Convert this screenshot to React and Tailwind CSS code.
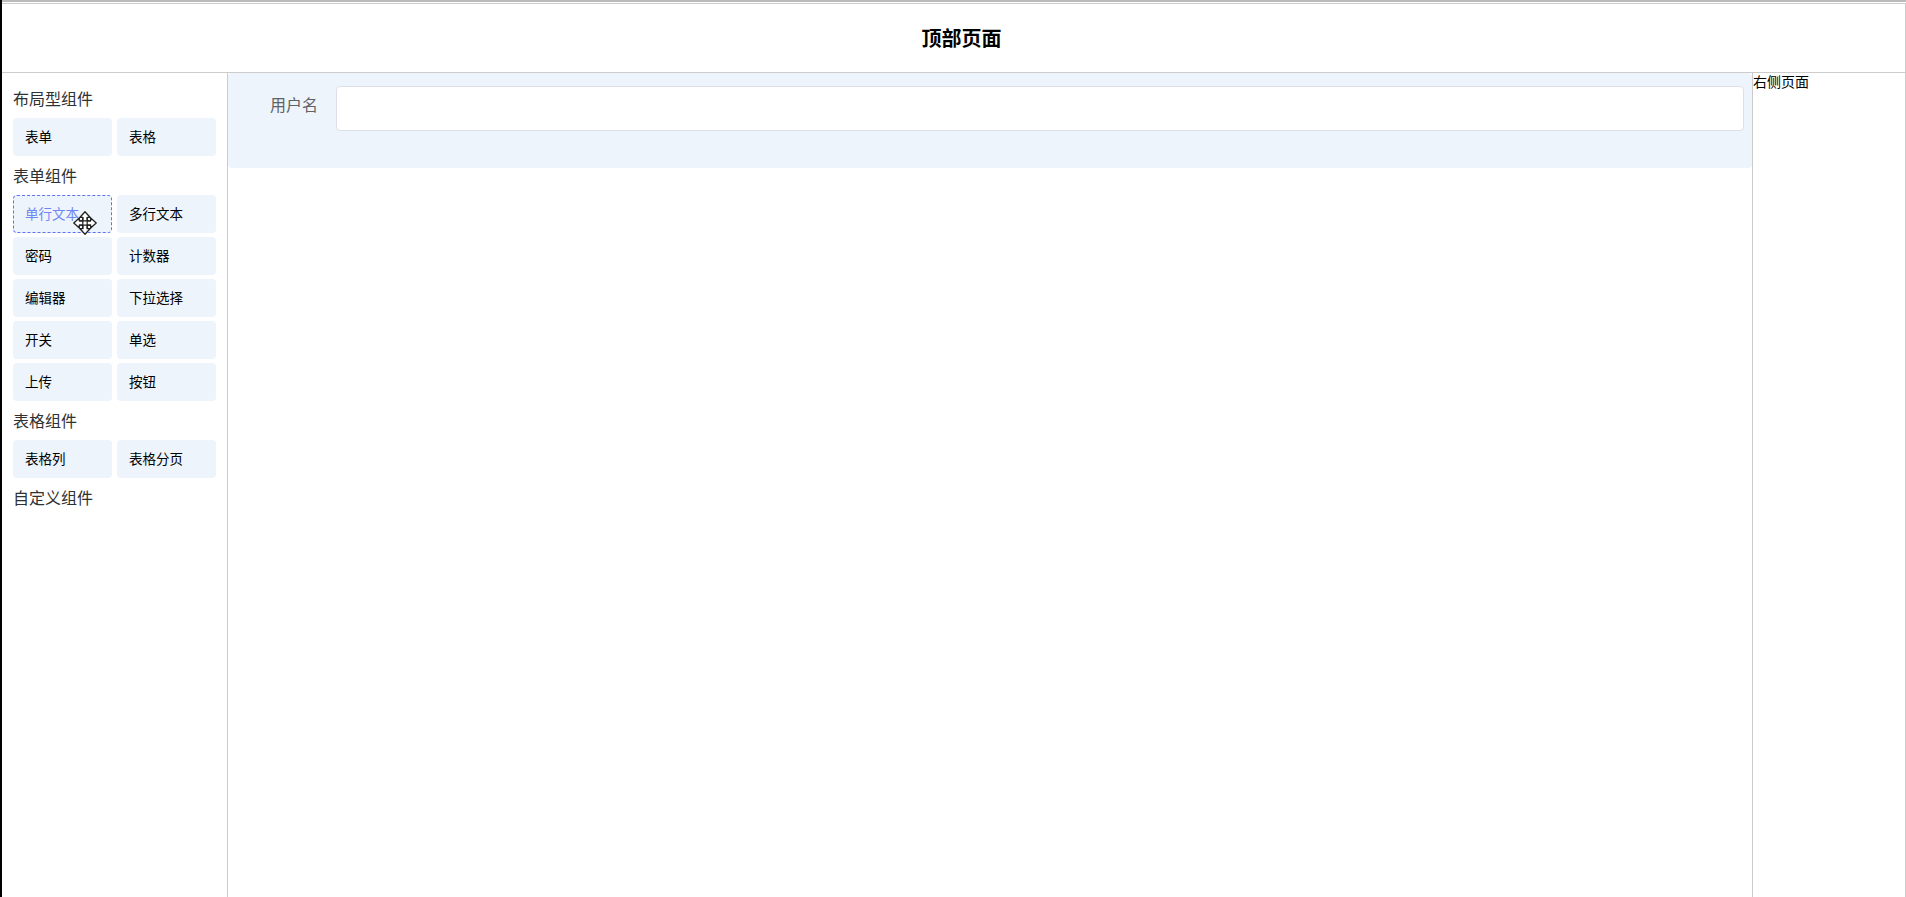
const font = { fontFamily: '"Noto Sans CJK SC", sans-serif' };

function Cursor() {
  return (
    <svg className="absolute left-[59px] top-[15px]" width="24" height="24" viewBox="0 0 24 24">
      <path
        d="M12 0.8 L17 6.3 L14.2 6.3 L14.2 9.8 L17.7 9.8 L17.7 7 L23.2 12 L17.7 17 L17.7 14.2 L14.2 14.2 L14.2 17.7 L17 17.7 L12 23.2 L7 17.7 L9.8 17.7 L9.8 14.2 L6.3 14.2 L6.3 17 L0.8 12 L6.3 7 L6.3 9.8 L9.8 9.8 L9.8 6.3 L7 6.3 Z"
        fill="#fff"
        stroke="#222"
        strokeWidth="1.3"
        strokeLinejoin="round"
      />
      <path d="M9.8 6.3 V17.7 M14.2 6.3 V17.7 M6.3 9.8 H17.7 M6.3 14.2 H17.7" stroke="#222" strokeWidth="1.2" fill="none" />
    </svg>
  );
}

function Item({ label, active }) {
  if (active) {
    return (
      <div className="relative flex h-[38px] items-center rounded-[4px] border border-dashed border-[#5f73f0] bg-[#edf4fc] pb-[2px] pl-[11px] text-[13.5px] text-[#7086f5]">
        {label}
        <Cursor />
      </div>
    );
  }
  return (
    <div className="flex h-[38px] items-center rounded-[4px] bg-[#edf4fc] pb-[2px] pl-[12px] text-[13.5px] text-black">
      {label}
    </div>
  );
}

function Group({ title, items, active }) {
  return (
    <>
      <div className="flex h-[39px] items-center pb-[2px] text-[16px] text-[#303133]">{title}</div>
      {items.length > 0 && (
        <div className="grid grid-cols-[99px_99px] gap-x-[5px] gap-y-[4px]">
          {items.map((i) => (
            <Item key={i} label={i} active={i === active} />
          ))}
        </div>
      )}
    </>
  );
}

export default function App() {
  return (
    <div style={font} className="flex h-[897px] w-[1906px] flex-col overflow-hidden border-l-[2px] border-l-black bg-white">
      <div className="h-[2px] bg-[#bbbbbb]" />
      <div className="h-[1px] bg-white" />
      <div className="flex min-h-0 flex-1 flex-col border-r border-t border-r-[#cccccc] border-t-[#cccccc]">
        <header className="flex h-[69px] shrink-0 items-center justify-center border-b border-[#cccccc] pl-[16px] text-[20px] font-bold text-black">
          顶部页面
        </header>
        <div className="flex min-h-0 flex-1">
          <aside className="w-[226px] shrink-0 border-r border-[#cccccc] px-[11px] pt-[6px]">
            <Group title="布局型组件" items={["表单", "表格"]} />
            <Group
              title="表单组件"
              active="单行文本"
              items={["单行文本", "多行文本", "密码", "计数器", "编辑器", "下拉选择", "开关", "单选", "上传", "按钮"]}
            />
            <Group title="表格组件" items={["表格列", "表格分页"]} />
            <Group title="自定义组件" items={[]} />
          </aside>
          <main className="min-w-0 flex-1">
            <div className="flex h-[95px] items-start rounded-[4px] bg-[#edf4fc] pr-[8px] pt-[13px]">
              <label className="flex h-[45px] w-[90px] shrink-0 items-center justify-end pb-[9px] text-[16px] text-[#606266]">
                用户名
              </label>
              <div className="ml-[18px] h-[45px] flex-1 rounded-[4px] border border-[#dcdfe6] bg-white" />
            </div>
          </main>
          <aside className="w-[153px] shrink-0 border-l border-[#cccccc] text-[14px] leading-[16px] text-black">
            右侧页面
          </aside>
        </div>
      </div>
    </div>
  );
}
